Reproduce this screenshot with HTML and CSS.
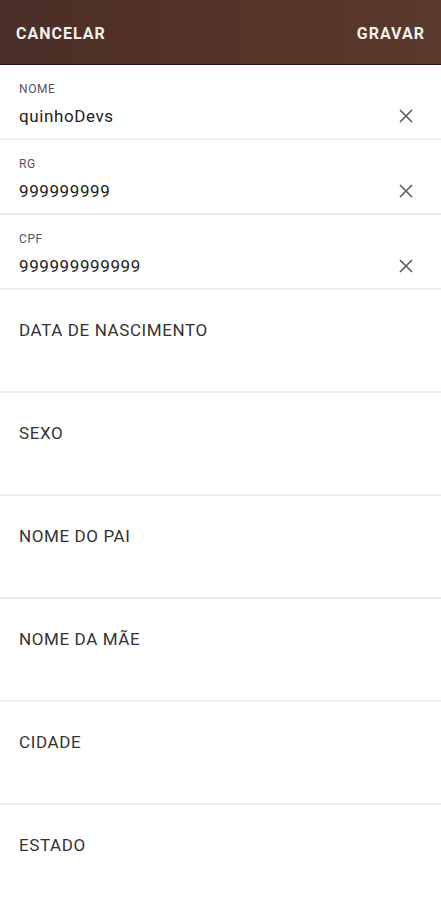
FILE: index.html
```html
<!DOCTYPE html>
<html lang="pt">
<head>
    <meta charset="UTF-8">
    <meta name="viewport" content="width=device-width, initial-scale=1.0">
    <title>Cadastro</title>
    <link rel="stylesheet" href="styles.css">
</head>
<body>
    <header class="toolbar">
        <span class="action">CANCELAR</span>
        <span class="action">GRAVAR</span>
    </header>

    <div class="form">
        <div class="field">
            <div class="field-text">
                <span class="label">NOME</span>
                <span class="value">quinhoDevs</span>
            </div>
            <svg class="clear" width="14" height="14" viewBox="0 0 14 14"><path d="M1 1L13 13M13 1L1 13" stroke="#5a5a5a" stroke-width="1.6"/></svg>
        </div>
        <div class="field">
            <div class="field-text">
                <span class="label">RG</span>
                <span class="value">999999999</span>
            </div>
            <svg class="clear" width="14" height="14" viewBox="0 0 14 14"><path d="M1 1L13 13M13 1L1 13" stroke="#5a5a5a" stroke-width="1.6"/></svg>
        </div>
        <div class="field">
            <div class="field-text">
                <span class="label">CPF</span>
                <span class="value">999999999999</span>
            </div>
            <svg class="clear" width="14" height="14" viewBox="0 0 14 14"><path d="M1 1L13 13M13 1L1 13" stroke="#5a5a5a" stroke-width="1.6"/></svg>
        </div>
        <div class="field empty">DATA DE NASCIMENTO</div>
        <div class="field empty">SEXO</div>
        <div class="field empty">NOME DO PAI</div>
        <div class="field empty">NOME DA MÃE</div>
        <div class="field empty">CIDADE</div>
        <div class="field empty">ESTADO</div>
    </div>
</body>
</html>
```

FILE: styles.css
```css
body {
    margin: 0;
    font-family: Roboto, 'Noto Sans', sans-serif;
    background-color: #fff;
    color: #222;
}
.toolbar {
    height: 65px;
    display: flex;
    align-items: center;
    justify-content: space-between;
    padding: 3px 16px 0 16px;
    box-sizing: border-box;
    background: linear-gradient(90deg, #4a2e27 0%, #553328 50%, #5a3a2c 100%);
    border-bottom: 1px solid #2a1510;
}
.action {
    color: #f4f0ee;
    font-weight: bold;
    font-size: 16px;
    letter-spacing: 1px;
}
.field {
    display: flex;
    align-items: flex-start;
    justify-content: space-between;
    height: 75px;
    box-sizing: border-box;
    padding: 16px 28px 0 19px;
    border-bottom: 2px solid #ececec;
}
.field-text {
    display: flex;
    flex-direction: column;
}
.label {
    font-size: 12px;
    color: #555;
    line-height: 16px;
    letter-spacing: 0.6px;
}
.value {
    font-size: 17px;
    color: #222;
    line-height: 30px;
    margin-top: 4px;
    letter-spacing: 0.6px;
}
.clear {
    margin-top: 28px;
}
.field.empty {
    padding-top: 30px;
    height: 103px;
    font-size: 17px;
    color: #333;
    letter-spacing: 0.6px;
}
```
